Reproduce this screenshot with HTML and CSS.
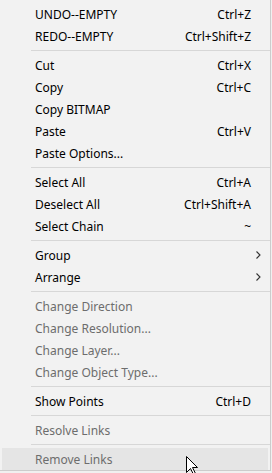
FILE: index.html
```html
<!DOCTYPE html>
<html lang="en">
<head>
    <meta charset="UTF-8">
    <title>Context Menu</title>
    <link rel="stylesheet" href="styles.css">
</head>
<body>
    <ul class="menu">
        <li class="item"><span class="label">UNDO--EMPTY</span><span class="key">Ctrl+Z</span></li>
        <li class="item"><span class="label">REDO--EMPTY</span><span class="key">Ctrl+Shift+Z</span></li>
        <li class="sep"></li>
        <li class="item"><span class="label">Cut</span><span class="key">Ctrl+X</span></li>
        <li class="item"><span class="label">Copy</span><span class="key">Ctrl+C</span></li>
        <li class="item"><span class="label">Copy BITMAP</span></li>
        <li class="item"><span class="label">Paste</span><span class="key">Ctrl+V</span></li>
        <li class="item"><span class="label">Paste Options...</span></li>
        <li class="sep"></li>
        <li class="item"><span class="label">Select All</span><span class="key">Ctrl+A</span></li>
        <li class="item"><span class="label">Deselect All</span><span class="key">Ctrl+Shift+A</span></li>
        <li class="item"><span class="label">Select Chain</span><span class="key">~</span></li>
        <li class="sep"></li>
        <li class="item"><span class="label">Group</span><span class="arrow"><svg width="5" height="8" viewBox="0 0 5 8"><path d="M0.5 0.5 L4 4 L0.5 7.5" fill="none" stroke="#333" stroke-width="1.1"/></svg></span></li>
        <li class="item"><span class="label">Arrange</span><span class="arrow"><svg width="5" height="8" viewBox="0 0 5 8"><path d="M0.5 0.5 L4 4 L0.5 7.5" fill="none" stroke="#333" stroke-width="1.1"/></svg></span></li>
        <li class="sep"></li>
        <li class="item off"><span class="label">Change Direction</span></li>
        <li class="item off"><span class="label">Change Resolution...</span></li>
        <li class="item off"><span class="label">Change Layer...</span></li>
        <li class="item off"><span class="label">Change Object Type...</span></li>
        <li class="sep"></li>
        <li class="item"><span class="label">Show Points</span><span class="key">Ctrl+D</span></li>
        <li class="sep"></li>
        <li class="item off"><span class="label">Resolve Links</span></li>
        <li class="sep"></li>
        <li class="item off hover"><span class="label">Remove Links</span></li>
    </ul>

    <svg class="cursor" width="13" height="20" viewBox="0 0 13 20">
        <path d="M0.5 0.5 V16.5 L4.5 12.5 L7.5 18.5 L9.5 17.5 L6.5 11.5 H11.5 Z" fill="#fff" stroke="#000" stroke-width="1"/>
    </svg>
</body>
</html>
```

FILE: styles.css
```css
body {
    margin: 0;
    background: #f0f0f0;
    font-family: "Noto Sans", "Open Sans", sans-serif;
    font-size: 12px;
    position: relative;
    width: 272px;
    height: 473px;
    overflow: hidden;
}

.menu {
    list-style: none;
    margin: 0;
    padding: 3px 0 0 0;
    width: 270px;
    height: 467px;
    background: #f2f2f2;
    border-left: 1px solid #cccccc;
    border-right: 1px solid #cccccc;
    border-bottom: 1px solid #cccccc;
    box-sizing: content-box;
    margin-left: -1px;
}

.item {
    display: grid;
    grid-template-columns: 1fr auto 19px;
    align-items: center;
    height: 22px;
    padding-left: 35px;
    color: #000;
}

.label {
    white-space: nowrap;
}

.key {
    grid-column: 2;
    white-space: nowrap;
}

.arrow {
    grid-column: 3;
    display: flex;
    padding-left: 5px;
}

.off {
    color: #6d6d6d;
}

.hover {
    background: #e5e5e5;
    margin: 0 2px;
    padding-left: 33px;
}

.sep {
    height: 1px;
    margin: 3px 0 3px 31px;
    background: #d7d7d7;
}

.cursor {
    position: absolute;
    left: 186px;
    top: 456px;
}
```
